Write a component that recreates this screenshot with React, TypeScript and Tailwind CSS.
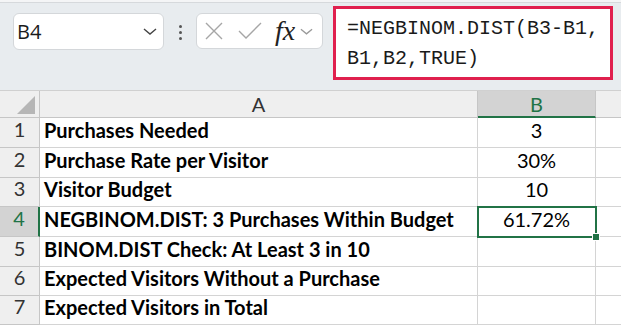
import React from 'react';

// Spreadsheet snapshot: formula bar + two-column sheet

const GREEN = '#217346';

const rows = [
  { n: 1, label: 'Purchases Needed', value: '3', h: 'h-[30px]' },
  { n: 2, label: 'Purchase Rate per Visitor', value: '30%', h: 'h-[30px]' },
  { n: 3, label: 'Visitor Budget', value: '10', h: 'h-[29px]' },
  { n: 4, label: 'NEGBINOM.DIST: 3 Purchases Within Budget', value: '61.72%', h: 'h-[30px]' },
  { n: 5, label: 'BINOM.DIST Check: At Least 3 in 10', value: '', h: 'h-[30px]' },
  { n: 6, label: 'Expected Visitors Without a Purchase', value: '', h: 'h-[29px]' },
  { n: 7, label: 'Expected Visitors in Total', value: '', h: 'h-[29px]' },
];

function Chevron({ className }: { className?: string }) {
  return (
    <svg viewBox="0 0 14 7" className={className} fill="none">
      <polyline points="1,1 7,6 13,1" stroke="currentColor" strokeWidth="1.4" />
    </svg>
  );
}

function FormulaBar() {
  return (
    <div className="relative h-[90px] bg-[#e8ecef]">
      {/* thin top strip */}
      <div className="h-[3px] bg-[#f4f5f6] border-b border-[#d6d9dc]" />
      <div className="flex items-start">
        {/* name box */}
        <div className="ml-[13px] mt-[10px] w-[151px] h-[37px] bg-white border border-[#d4d7da] rounded-[6px] flex items-center pl-[3px] pr-[6px]">
          <span className="text-[20px] leading-none text-[#1a1a1a] font-['Open_Sans',sans-serif]">B4</span>
          <Chevron className="ml-auto w-[14px] h-[7px] text-[#444]" />
        </div>
        {/* dots */}
        <div className="w-[32px] mt-[22px] flex flex-col items-center gap-[3px]">
          <span className="w-[3px] h-[3px] rounded-full bg-[#555]" />
          <span className="w-[3px] h-[3px] rounded-full bg-[#555]" />
          <span className="w-[3px] h-[3px] rounded-full bg-[#555]" />
        </div>
        {/* cancel / enter / fx */}
        <div className="mt-[10px] w-[127px] h-[36px] bg-white border border-[#d4d7da] rounded-[6px] flex items-center pl-[8px]">
          <svg viewBox="0 0 18 18" className="w-[18px] h-[18px]" fill="none">
            <path d="M1 1 L17 17 M17 1 L1 17" stroke="#a6a6a6" strokeWidth="1.4" />
          </svg>
          <svg viewBox="0 0 24 18" className="ml-[15px] w-[24px] h-[18px]" fill="none">
            <path d="M1 9 L8 16 L23 1" stroke="#a6a6a6" strokeWidth="1.4" />
          </svg>
          <span className="ml-[13px] text-[28px] italic text-[#222] leading-none font-['Liberation_Serif',serif]">fx</span>
          <Chevron className="ml-[5px] w-[13px] h-[7px] text-[#999]" />
        </div>
        {/* formula box */}
        <div className="ml-[10px] mt-[3px] w-[280px] h-[74px] bg-white border-[3px] border-[#e0204e] pl-[11px] pt-[5px]">
          <div className="text-[20px] leading-[30px] text-[#1a1a1a] font-['Liberation_Mono',monospace]">
            <div>=NEGBINOM.DIST(B3-B1,</div>
            <div>B1,B2,TRUE)</div>
          </div>
        </div>
      </div>
    </div>
  );
}

function Sheet() {
  return (
    <div className="relative font-['Lato',sans-serif]">
      {/* column headers */}
      <div className="flex h-[28px] border-t border-[#d0d0d0] bg-[#efefef]">
        <div className="relative w-[40px] border-r border-b border-[#c6c6c6]">
          <svg viewBox="0 0 18 18" className="absolute left-[17px] top-[5px] w-[18px] h-[18px]">
            <polygon points="18,0 18,18 0,18" fill="#b6b6b6" />
          </svg>
        </div>
        <div className="w-[438px] border-r border-b border-[#c6c6c6] flex items-center justify-center text-[20px] text-[#333]">
          A
        </div>
        <div className="w-[118px] bg-[#d3d3d3] border-r border-[#c6c6c6] border-b-2 border-b-[#217346] flex items-center justify-center text-[20px] text-[#217346]">
          B
        </div>
        <div className="flex-1 border-b border-[#c6c6c6]" />
      </div>

      {rows.map((r) => {
        const active = r.n === 4;
        return (
          <div key={r.n} className={`flex ${r.h}`}>
            <div
              className={`w-[40px] border-b border-[#c6c6c6] flex items-end justify-center pb-[3px] text-[20px] ${
                active
                  ? 'bg-[#d3d3d3] text-[#217346] border-r-2 border-r-[#217346]'
                  : 'bg-[#efefef] text-[#333] border-r border-r-[#c6c6c6]'
              }`}
            >
              {r.n}
            </div>
            <div className="w-[438px] border-r border-b border-[#d4d4d4] flex items-end pl-[4px] pb-[2px] text-[20px] font-bold text-black whitespace-nowrap">
              {r.label}
            </div>
            <div className="w-[118px] border-r border-b border-[#d4d4d4] flex items-end justify-center pb-[2px] text-[20px] text-black">
              {r.value}
            </div>
            <div className="flex-1 border-b border-[#d4d4d4]" />
          </div>
        );
      })}
      <div className="h-[10px] bg-white" />

      {/* active cell outline and fill handle */}
      <div className="absolute left-[477px] top-[116px] w-[120px] h-[32px] border-2 pointer-events-none" style={{ borderColor: GREEN }} />
      <div className="absolute left-[592px] top-[143px] w-[8px] h-[8px] bg-[#217346] border border-white" />
    </div>
  );
}

export default function App() {
  return (
    <div className="w-[621px] h-[328px] overflow-hidden bg-white">
      <FormulaBar />
      <Sheet />
    </div>
  );
}
